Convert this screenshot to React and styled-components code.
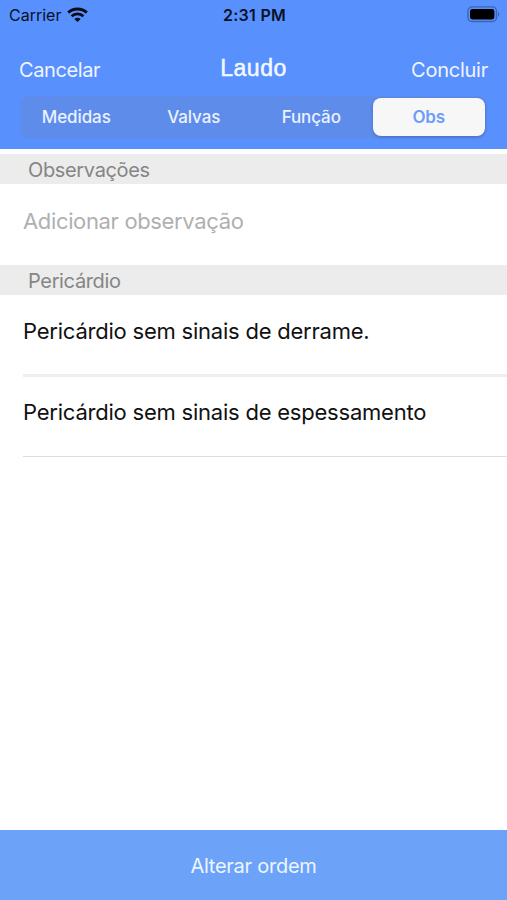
import { useState } from "react";
import styled, { createGlobalStyle } from "styled-components";

const GlobalStyle = createGlobalStyle`
  * {
    box-sizing: border-box;
  }
  body {
    margin: 0;
    background: #fff;
    font-family: Inter, "Liberation Sans", sans-serif;
  }
  button {
    margin: 0;
    padding: 0;
    border: 0;
    background: none;
    font-family: inherit;
    white-space: nowrap;
  }
`;

const Screen = styled.div`
  display: flex;
  flex-direction: column;
  width: 507px;
  height: 900px;
  overflow: hidden;
  background: #fff;
`;

const Header = styled.header`
  height: 149px;
  flex: none;
  background: #5890fe;
`;

const StatusBar = styled.div`
  display: grid;
  grid-template-columns: 1fr auto 1fr;
  align-items: center;
  height: 30px;
  padding: 0 7px 0 9px;
  color: #081226;
`;

const Carrier = styled.div`
  display: flex;
  align-items: center;
  gap: 6px;
  font-size: 16px;
`;

const Clock = styled.div`
  font-size: 16px;
  font-weight: 600;
  letter-spacing: 0.3px;
`;

const Wifi = styled.svg`
  margin-top: -2px;
`;

const Battery = styled.svg`
  justify-self: end;
  margin-top: -2px;
`;

const NavBar = styled.div`
  display: grid;
  grid-template-columns: 1fr auto 1fr;
  align-items: center;
  height: 66px;
  padding: 14px 19px 0;
`;

const NavButton = styled.button`
  justify-self: ${(props) => (props.$end ? "end" : "start")};
  color: #f0f5ff;
  font-size: 20px;
  letter-spacing: ${(props) => (props.$end ? "-0.25px" : "-0.4px")};
`;

const Title = styled.h1`
  margin: 0;
  padding-bottom: 4px;
  color: #f4f8ff;
  font-family: "Liberation Sans", sans-serif;
  font-size: 23px;
  font-weight: 400;
  letter-spacing: 0.5px;
  -webkit-text-stroke: 0.5px #f4f8ff;
`;

const Segments = styled.div`
  display: grid;
  grid-template-columns: repeat(4, 1fr);
  gap: 5px;
  height: 43px;
  margin: 0 20px;
  padding: 2px 2px 3px 0;
  border-radius: 9px;
  background: #5e8ceb;
`;

const Segment = styled.button`
  border-radius: 8px;
  color: ${(props) => (props.$active ? "#6b9dfa" : "#eaf2ff")};
  background: ${(props) => (props.$active ? "#f7f7f7" : "transparent")};
  box-shadow: ${(props) =>
    props.$active ? "0 1px 3px rgba(30, 60, 130, 0.4)" : "none"};
  font-size: 17px;
  font-weight: ${(props) => (props.$active ? 600 : 500)};
  letter-spacing: -0.1px;
`;

const Content = styled.main`
  flex: 1;
  padding-top: 5px;
`;

const SectionTitle = styled.h2`
  display: flex;
  align-items: center;
  height: 30px;
  margin: 0;
  padding: 2px 0 0 28px;
  color: #858585;
  background: #ececec;
  font-size: 20px;
  font-weight: 400;
  letter-spacing: -0.35px;
`;

const Input = styled.input`
  display: block;
  width: 100%;
  height: 81px;
  padding: 0 23px 7px;
  border: 0;
  outline: 0;
  font-family: inherit;
  font-size: 22px;
  letter-spacing: -0.35px;
  &::placeholder {
    color: #b0b0b0;
    opacity: 1;
  }
`;

const Row = styled.div`
  display: flex;
  align-items: center;
  height: ${(props) => (props.$last ? 80 : 82)}px;
  margin-left: 23px;
  padding-bottom: ${(props) => (props.$last ? 9 : 7)}px;
  border-bottom: ${(props) =>
    props.$last ? "1px solid #dedede" : "3px solid #eeeeee"};
  color: #111;
  font-size: 22px;
  letter-spacing: -0.22px;
  white-space: nowrap;
`;

const Footer = styled.button`
  flex: none;
  height: 70px;
  padding-top: 2px;
  color: #edf5ff;
  background: #6ca3f8;
  font-size: 20px;
  letter-spacing: -0.25px;
`;

const WifiIcon = () => (
  <Wifi width="21" height="15" viewBox="0 0 21 15" fill="none">
    <path d="M1.2 5.6C6.4.7 14.6.7 19.8 5.6" stroke="#050b18" strokeWidth="2.9" />
    <path d="M4.6 9.2C8 6 13 6 16.4 9.2" stroke="#050b18" strokeWidth="2.7" />
    <path d="M7.3 11.9c1.8-1.7 4.6-1.7 6.4 0L10.5 15z" fill="#050b18" />
  </Wifi>
);

const BatteryIcon = () => (
  <Battery width="33" height="17" viewBox="0 0 33 17">
    <rect x="0.9" y="0.9" width="28.6" height="14.6" rx="4.2" fill="none" stroke="#3d64b3" strokeWidth="1.4" />
    <rect x="3" y="3" width="24.4" height="10.4" rx="2.4" fill="#000" />
    <path d="M31 5.8c1.7.7 1.7 4.1 0 4.8z" fill="#3d64b3" />
  </Battery>
);

const tabs = ["Medidas", "Valvas", "Função", "Obs"];
const findings = [
  "Pericárdio sem sinais de derrame.",
  "Pericárdio sem sinais de espessamento",
];

function App() {
  const [tab, setTab] = useState("Obs");

  return (
    <>
      <GlobalStyle />
      <Screen>
        <Header>
          <StatusBar>
            <Carrier>
              Carrier
              <WifiIcon />
            </Carrier>
            <Clock>2:31 PM</Clock>
            <BatteryIcon />
          </StatusBar>
          <NavBar>
            <NavButton>Cancelar</NavButton>
            <Title>Laudo</Title>
            <NavButton $end>Concluir</NavButton>
          </NavBar>
          <Segments>
            {tabs.map((name) => (
              <Segment key={name} $active={name === tab} onClick={() => setTab(name)}>
                {name}
              </Segment>
            ))}
          </Segments>
        </Header>
        <Content>
          <SectionTitle>Observações</SectionTitle>
          <Input placeholder="Adicionar observação" />
          <SectionTitle>Pericárdio</SectionTitle>
          {findings.map((text, i) => (
            <Row key={text} $last={i === findings.length - 1}>
              {text}
            </Row>
          ))}
        </Content>
        <Footer>Alterar ordem</Footer>
      </Screen>
    </>
  );
}

export default App;
